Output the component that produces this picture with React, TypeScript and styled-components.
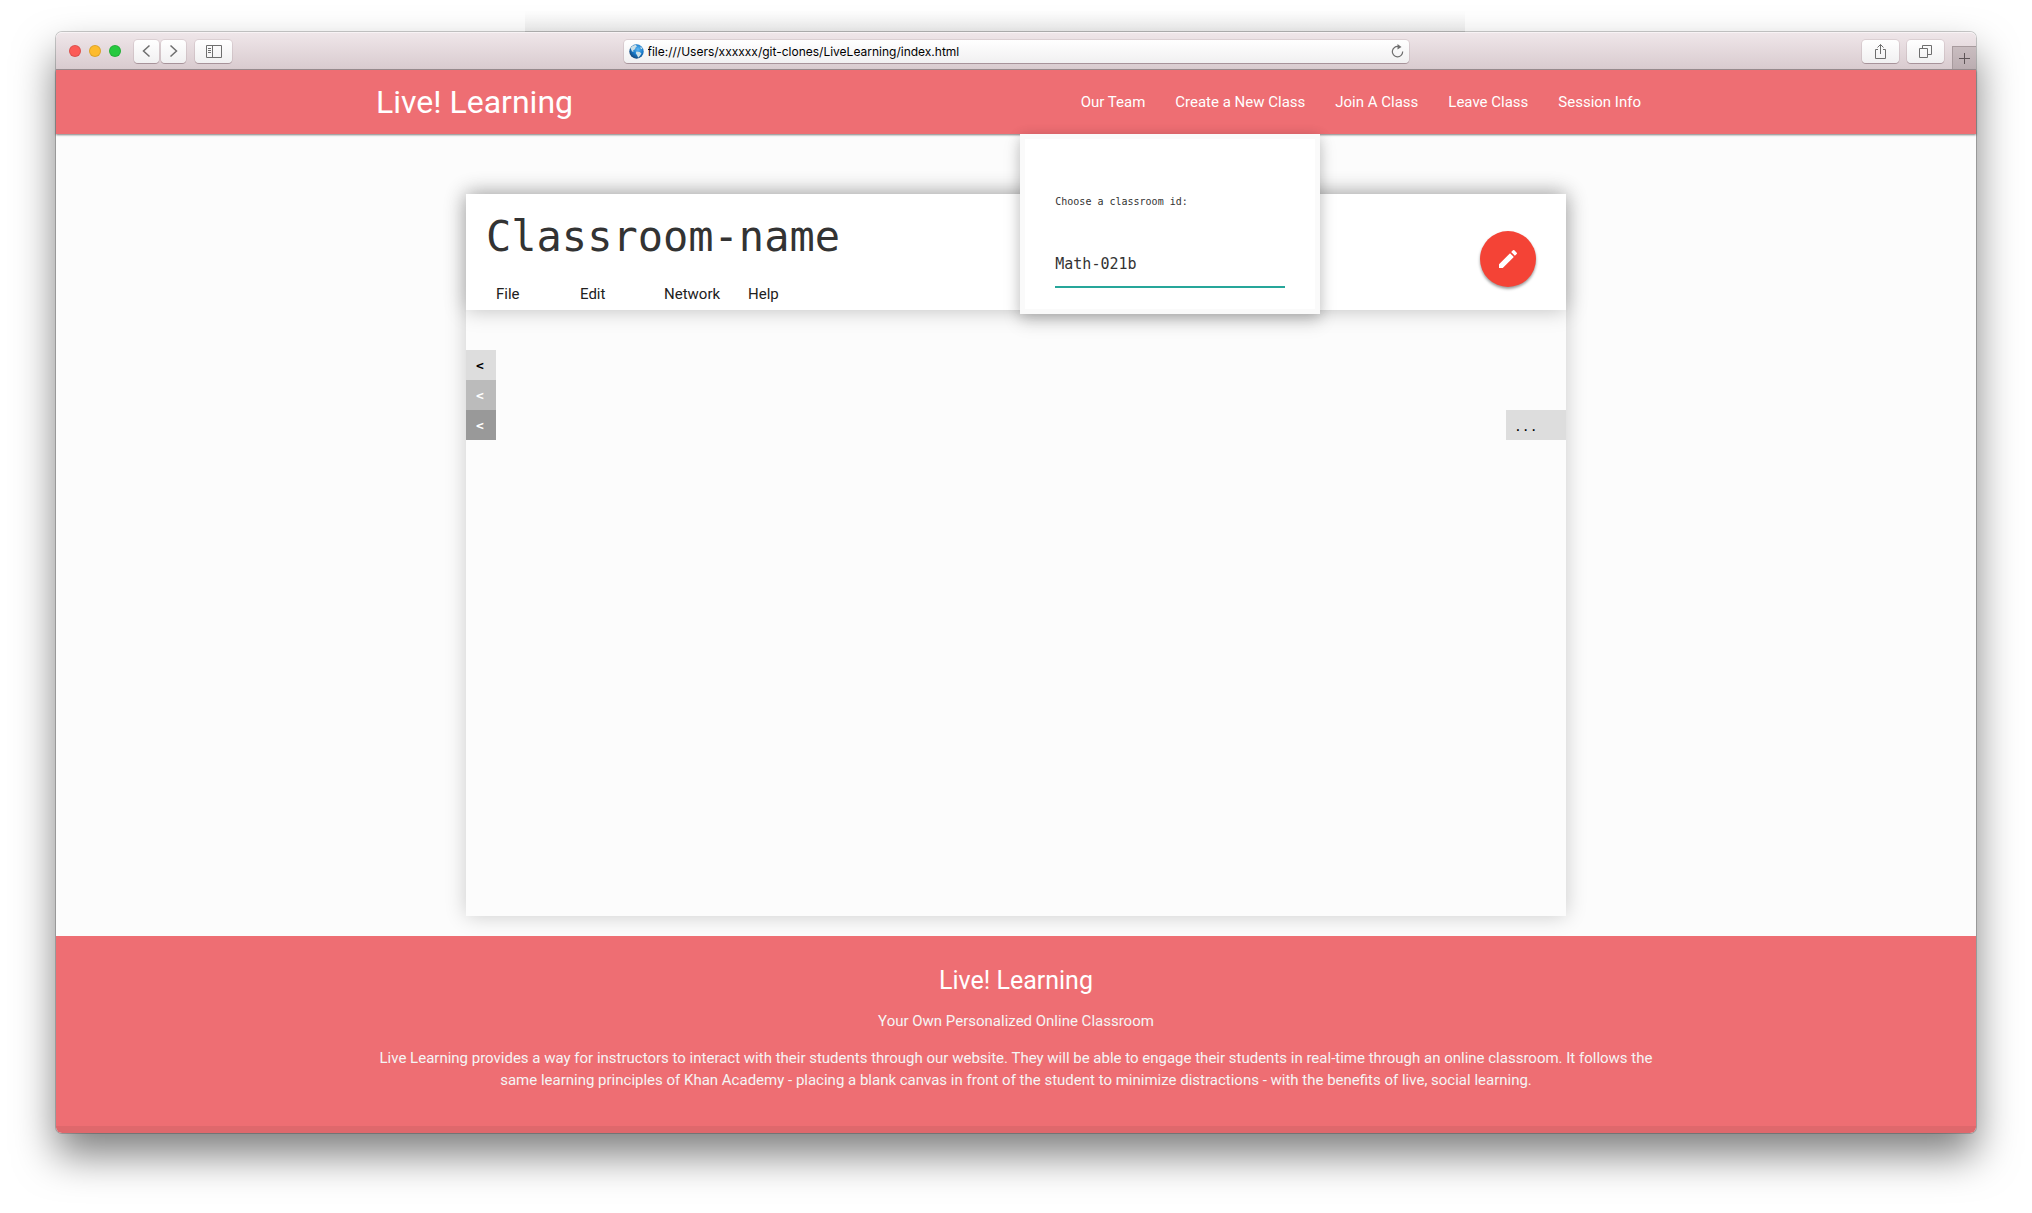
import React, { useState } from "react";
import styled, { createGlobalStyle } from "styled-components";

const CORAL = "#ee6e73";
const MONO = '"DejaVu Sans Mono", "Liberation Mono", monospace';

const GlobalStyle = createGlobalStyle`
  *, *::before, *::after { box-sizing: border-box; }
  body {
    margin: 0;
    background: #fff;
    color: #212121;
    font-family: Roboto, "Liberation Sans", sans-serif;
    font-size: 15px;
    line-height: 22px;
  }
  button, input { font: inherit; color: inherit; }
  button { border: 0; padding: 0; background: none; cursor: pointer; }
  h1, h2, h3, p, ul { margin: 0; padding: 0; font-weight: 400; }
  ul { list-style: none; }
  a { color: inherit; text-decoration: none; }
`;

const Desktop = styled.div`
  position: relative;
  display: flex;
  min-height: 100vh;
  padding: 32px 56px 80px;
`;

const GhostWindow = styled.div`
  position: absolute;
  top: 10px;
  left: 50%;
  width: 940px;
  height: 22px;
  transform: translateX(-491px);
  border-bottom: 1px solid #aaa;
  background: linear-gradient(rgba(0, 0, 0, 0), rgba(0, 0, 0, 0.06));
`;

const BrowserWindow = styled.div`
  display: flex;
  flex: 1;
  flex-direction: column;
  min-width: 0;
  border-radius: 6px;
  background: #fcfcfc;
  box-shadow: 0 0 0 1px rgba(0, 0, 0, 0.2), 0 22px 40px rgba(0, 0, 0, 0.5);
`;

const Toolbar = styled.div`
  display: grid;
  grid-template-columns: 1fr minmax(0, 785px) 1fr;
  align-items: center;
  height: 38px;
  border-top: 1px solid #f8f3f5;
  border-bottom: 1px solid #9c9093;
  border-radius: 6px 6px 0 0;
  background: linear-gradient(#efe6e9, #d9cbcf);
`;

const ToolGroup = styled.div<{ $end?: boolean }>`
  display: flex;
  align-items: center;
  align-self: stretch;
  justify-content: ${(p) => (p.$end ? "flex-end" : "flex-start")};
  gap: ${(p) => (p.$end ? 8 : 9)}px;
  padding-left: ${(p) => (p.$end ? 0 : 13)}px;
`;

const Pair = styled.div<{ $gap: number }>`
  display: flex;
  gap: ${(p) => p.$gap}px;
`;

const Lights = styled(Pair)`
  margin-right: 4px;
`;

const Light = styled.button<{ $color: string }>`
  width: 12px;
  height: 12px;
  border: 1px solid rgba(0, 0, 0, 0.12);
  border-radius: 50%;
  background: ${(p) => p.$color};
`;

const ToolButton = styled.button<{ $wide?: boolean }>`
  display: flex;
  align-items: center;
  justify-content: center;
  width: ${(p) => (p.$wide ? 37 : 25)}px;
  height: 23px;
  border-radius: 4px;
  background: linear-gradient(#fff, #f1f0f1);
  box-shadow: 0 1px 0 rgba(80, 50, 60, 0.3), 0 0 0 1px rgba(80, 50, 60, 0.1);
  color: #6e6e6e;
`;

const NewTab = styled.button`
  display: flex;
  align-items: center;
  justify-content: center;
  align-self: flex-end;
  width: 24px;
  height: 23px;
  border-top: 1px solid #a89b9e;
  border-left: 1px solid #a89b9e;
  background: linear-gradient(#c9bdc0, #bbadb1);
  color: #5e5557;
`;

const AddressBar = styled.div`
  display: flex;
  align-items: center;
  gap: 4px;
  height: 23px;
  padding: 0 5px;
  border-radius: 4px;
  background: linear-gradient(#fff, #f1f0f1);
  box-shadow: 0 1px 0 rgba(80, 50, 60, 0.3), 0 0 0 1px rgba(80, 50, 60, 0.1);
`;

const Address = styled.input`
  flex: 1;
  min-width: 0;
  border: 0;
  padding: 1px 0 0;
  outline: 0;
  background: none;
  color: #000;
  font-family: Inter, "Liberation Sans", sans-serif;
  font-size: 12px;
  line-height: 16px;
`;

const PlainButton = styled.button`
  display: flex;
  color: #6e6e6e;
`;

const Container = styled.div`
  width: 100%;
  max-width: 1280px;
  margin: 0 auto;
`;

const NavBar = styled.header`
  position: relative;
  z-index: 2;
  background: ${CORAL};
  color: #fff;
  box-shadow: 0 1px 2px rgba(0, 0, 0, 0.5);
`;

const NavInner = styled(Container)`
  display: flex;
  align-items: center;
  justify-content: space-between;
  height: 64px;
`;

const Brand = styled.a`
  font-size: 32px;
  line-height: 64px;
`;

const NavList = styled.ul`
  display: flex;
`;

const NavItem = styled.li`
  position: relative;
`;

const NavLink = styled.a`
  display: block;
  padding: 0 15px;
  line-height: 64px;
`;

const DropPanel = styled.form`
  position: absolute;
  top: 100%;
  right: 100%;
  display: flex;
  flex-direction: column;
  width: 300px;
  height: 180px;
  padding: 52px 30px 19px;
  border: 5px solid #fafafa;
  background: #fff;
  color: #333;
  font-family: ${MONO};
  box-shadow: 0 8px 17px rgba(0, 0, 0, 0.15), 0 2px 12px rgba(0, 0, 0, 0.15);
`;

const FieldLabel = styled.label`
  font-size: 10px;
  line-height: 22px;
`;

const Field = styled.input`
  height: 46px;
  margin-top: 29px;
  border: 0;
  border-bottom: 2px solid #26a69a;
  padding: 0;
  outline: 0;
  background: none;
  font-size: 15px;
`;

const Main = styled.main`
  display: flex;
  flex: 1;
  justify-content: center;
  padding: 60px 20px 20px;
`;

const Classroom = styled.section`
  display: flex;
  flex-direction: column;
  width: 100%;
  max-width: 1100px;
  background: #fcfcfc;
  box-shadow: 0 0 20px rgba(0, 0, 0, 0.2);
`;

const ClassHeader = styled.div`
  display: flex;
  align-items: center;
  justify-content: space-between;
  height: 116px;
  padding: 17px 30px 0 20px;
  background: #fff;
  box-shadow: 0 0 20px rgba(0, 0, 0, 0.25);
`;

const ClassInfo = styled.div`
  align-self: stretch;
`;

const ClassName = styled.h1`
  color: #333;
  font-family: ${MONO};
  font-size: 42px;
  line-height: 52px;
`;

const MenuBar = styled.div`
  display: grid;
  grid-template-columns: repeat(4, 84px);
  margin-top: 20px;
  padding-left: 10px;
`;

const MenuButton = styled.button`
  line-height: 22px;
  text-align: left;
`;

const EditButton = styled.button`
  display: flex;
  align-items: center;
  justify-content: center;
  width: 56px;
  height: 56px;
  border-radius: 50%;
  background: #f44336;
  color: #fff;
  box-shadow: 0 2px 3px rgba(0, 0, 0, 0.4);
`;

const EditSlot = styled.div`
  padding-bottom: 3px;
`;

const Board = styled.div`
  display: flex;
  align-items: flex-end;
  justify-content: space-between;
  padding-top: 40px;
`;

const Drawers = styled.div`
  display: grid;
  grid-template-rows: repeat(3, 30px);
`;

const Tab = styled.button<{ $bg: string; $fg: string }>`
  width: 30px;
  height: 30px;
  padding: 2px 0 0 10px;
  background: ${(p) => p.$bg};
  color: ${(p) => p.$fg};
  font-family: ${MONO};
  font-size: 13px;
  font-weight: 700;
  line-height: 28px;
  text-align: left;
`;

const MoreTab = styled(Tab)`
  width: 60px;
  padding: 4px 0 0 8px;
  font-weight: 400;
  line-height: 26px;
`;

const Footer = styled.footer`
  border-bottom: 7px solid #df686c;
  border-radius: 0 0 6px 6px;
  padding: 31px 0 35px;
  background: ${CORAL};
  color: #f5f5f5;
  text-align: center;
`;

const FooterInner = styled(Container)`
  display: grid;
  gap: 15px;
`;

const FooterTitle = styled.h2`
  color: #fff;
  font-size: 25px;
  line-height: 28px;
`;

const Globe = () => (
  <svg width="15" height="15" viewBox="0 0 15 15" aria-hidden="true">
    <defs>
      <radialGradient id="sea" cx="60%" cy="35%" r="70%">
        <stop offset="0" stopColor="#5cb8f5" />
        <stop offset="0.55" stopColor="#1778c8" />
        <stop offset="1" stopColor="#15406f" />
      </radialGradient>
    </defs>
    <circle cx="7.5" cy="7.5" r="7.2" fill="url(#sea)" />
    <path d="M1.5 4C3 1.6 5 .8 6.8.9L8 2.2 6.6 3.4 6 5.2 4.2 6.2 4.6 7.8 3 7.4zM7.4 7.4l3.4.6 1.6 1.4-1.4 2.4-1.8 2-1-2.4-1.4-2.2zM11.6 2.4l1.8 2-.8.8-1.2-1z" fill="#cde0e6" />
  </svg>
);

const Chevron = ({ right = false }: { right?: boolean }) => (
  <svg width="9" height="14" viewBox="0 0 9 14" fill="none" stroke="currentColor" strokeWidth="1.5" aria-hidden="true">
    <path d={right ? "M1.5 1.5L7.5 7l-6 5.5" : "M7.5 1.5L1.5 7l6 5.5"} />
  </svg>
);

const SidebarIcon = () => (
  <svg width="16" height="13" viewBox="0 0 16 13" fill="none" stroke="currentColor" aria-hidden="true">
    <path d="M.5.5h15v12H.5zM6.5.5v12M2 3.5h3M2 5.5h3M2 7.5h3" />
  </svg>
);

const ShareIcon = () => (
  <svg width="13" height="17" viewBox="0 0 13 17" fill="none" stroke="currentColor" aria-hidden="true">
    <path d="M4 6.5H1.500v9h10v-9H9M6.500 11V1.500M3.500 4.500l3-3 3 3" />
  </svg>
);

const TabsIcon = () => (
  <svg width="13" height="13" viewBox="0 0 13 13" fill="none" stroke="currentColor" aria-hidden="true">
    <path d="M.5 3.500h8v9h-8zM3.500 3.500v-3h9v9h-4" />
  </svg>
);

const PlusIcon = () => (
  <svg width="11" height="11" viewBox="0 0 11 11" stroke="currentColor" aria-hidden="true">
    <path d="M5.500 0v11M0 5.500h11" />
  </svg>
);

const ReloadIcon = () => (
  <svg width="13" height="14" viewBox="0 0 13 14" fill="none" stroke="currentColor" strokeWidth="1.200" aria-hidden="true">
    <path d="M11.700 7.500a5.200 5.200 0 1 1-4.200-5" />
    <path d="M6.500 0v5.600l4-2.600z" fill="currentColor" stroke="none" />
  </svg>
);

const PencilIcon = () => (
  <svg width="24" height="24" viewBox="0 0 24 24" fill="currentColor" aria-hidden="true">
    <path d="M3 17.250V21h3.750L17.810 9.940l-3.750-3.750L3 17.250zM20.710 7.040a1 1 0 0 0 0-1.410l-2.340-2.340a1 1 0 0 0-1.410 0l-1.830 1.830 3.750 3.750 1.830-1.830z" />
  </svg>
);

const drawers = [
  { bg: "#ddd", fg: "#000", label: "Open first drawer" },
  { bg: "#bbb", fg: "#fff", label: "Open second drawer" },
  { bg: "#999", fg: "#fff", label: "Open third drawer" },
];

export default function App() {
  const [address, setAddress] = useState("file:///Users/xxxxxx/git-clones/LiveLearning/index.html");
  const [classId, setClassId] = useState("Math-021b");

  return (
    <>
      <GlobalStyle />
      <Desktop>
        <GhostWindow />
        <BrowserWindow>
          <Toolbar>
            <ToolGroup>
              <Lights $gap={8}>
                <Light $color="#fc5b57" aria-label="Close" />
                <Light $color="#fdbb2d" aria-label="Minimise" />
                <Light $color="#27c93f" aria-label="Zoom" />
              </Lights>
              <Pair $gap={2}>
                <ToolButton aria-label="Back"><Chevron /></ToolButton>
                <ToolButton aria-label="Forward"><Chevron right /></ToolButton>
              </Pair>
              <ToolButton $wide aria-label="Sidebar"><SidebarIcon /></ToolButton>
            </ToolGroup>
            <AddressBar>
              <Globe />
              <Address aria-label="Address" value={address} onChange={(e) => setAddress(e.target.value)} />
              <PlainButton aria-label="Reload"><ReloadIcon /></PlainButton>
            </AddressBar>
            <ToolGroup $end>
              <ToolButton $wide aria-label="Share"><ShareIcon /></ToolButton>
              <ToolButton $wide aria-label="Show tabs"><TabsIcon /></ToolButton>
              <NewTab aria-label="New tab"><PlusIcon /></NewTab>
            </ToolGroup>
          </Toolbar>

          <NavBar>
            <NavInner>
              <Brand href="#">Live! Learning</Brand>
              <nav>
                <NavList>
                  <NavItem><NavLink href="#team">Our Team</NavLink></NavItem>
                  <NavItem><NavLink href="#create">Create a New Class</NavLink></NavItem>
                  <NavItem>
                    <NavLink href="#join">Join A Class</NavLink>
                    <DropPanel onSubmit={(e) => e.preventDefault()}>
                      <FieldLabel htmlFor="class-id">Choose a classroom id:</FieldLabel>
                      <Field id="class-id" value={classId} onChange={(e) => setClassId(e.target.value)} />
                    </DropPanel>
                  </NavItem>
                  <NavItem><NavLink href="#leave">Leave Class</NavLink></NavItem>
                  <NavItem><NavLink href="#session">Session Info</NavLink></NavItem>
                </NavList>
              </nav>
            </NavInner>
          </NavBar>

          <Main>
            <Classroom>
              <ClassHeader>
                <ClassInfo>
                  <ClassName>Classroom-name</ClassName>
                  <MenuBar>
                    {["File", "Edit", "Network", "Help"].map((item) => (
                      <MenuButton key={item}>{item}</MenuButton>
                    ))}
                  </MenuBar>
                </ClassInfo>
                <EditSlot>
                  <EditButton aria-label="Edit classroom"><PencilIcon /></EditButton>
                </EditSlot>
              </ClassHeader>
              <Board>
                <Drawers>
                  {drawers.map((d) => (
                    <Tab key={d.label} $bg={d.bg} $fg={d.fg} aria-label={d.label}>&lt;</Tab>
                  ))}
                </Drawers>
                <MoreTab $bg="#ddd" $fg="#000" aria-label="More">...</MoreTab>
              </Board>
            </Classroom>
          </Main>

          <Footer>
            <FooterInner>
              <FooterTitle>Live! Learning</FooterTitle>
              <p>Your Own Personalized Online Classroom</p>
              <p>
                Live Learning provides a way for instructors to interact with their students through our website. They
                will be able to engage their students in real-time through an online classroom. It follows the same
                learning principles of Khan Academy - placing a blank canvas in front of the student to minimize
                distractions - with the benefits of live, social learning.
              </p>
            </FooterInner>
          </Footer>
        </BrowserWindow>
      </Desktop>
    </>
  );
}
